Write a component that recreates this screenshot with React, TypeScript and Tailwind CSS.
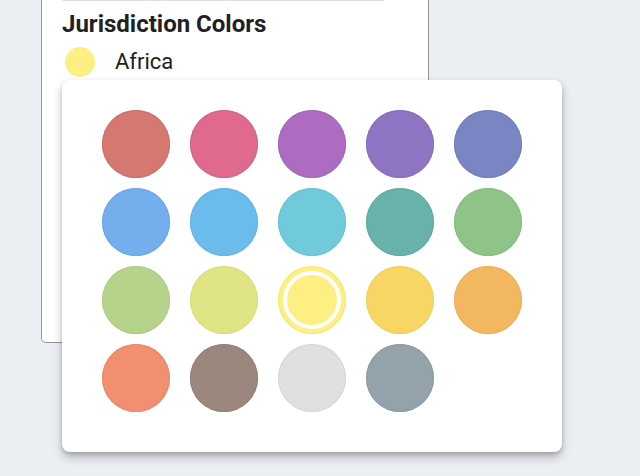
import React from "react";

const colors: { c: string; b: string }[] = [
  { c: "#d57872", b: "#cd6f69" },
  { c: "#df6a8e", b: "#d76286" },
  { c: "#ad6cc1", b: "#a564b9" },
  { c: "#8f74c4", b: "#876cbc" },
  { c: "#7986c3", b: "#717ebb" },
  { c: "#74aeed", b: "#6ca6e5" },
  { c: "#6bbcec", b: "#63b4e4" },
  { c: "#70cadb", b: "#68c2d3" },
  { c: "#68b2aa", b: "#60aaa2" },
  { c: "#8fc489", b: "#87bc81" },
  { c: "#b6d38c", b: "#aecb84" },
  { c: "#dfe584", b: "#d7dd7c" },
  { c: "#fdef82", b: "#f5e77a" },
  { c: "#f7d666", b: "#efce5e" },
  { c: "#f2b760", b: "#eaaf58" },
  { c: "#f09070", b: "#e88868" },
  { c: "#9b877d", b: "#937f75" },
  { c: "#e0e0e0", b: "#d6d6d6" },
  { c: "#94a2ab", b: "#8c9aa3" },
];

export default function App() {
  return (
    <div
      className="relative w-[640px] h-[476px] overflow-hidden bg-[#ebeef3]"
      style={{ fontFamily: "Roboto, 'Liberation Sans', sans-serif" }}
    >
      {/* Background card */}
      <div className="absolute left-[41px] top-[-40px] w-[388px] h-[383px] bg-white border border-[#959595] rounded-[5px]">
        <div className="ml-[20px] mt-[38px] w-[322px] h-[2px] bg-[#e0e0e0]" />
        <div className="ml-[20px] mt-[9px] text-[24px] leading-[28px] font-bold text-[#212121]">
          Jurisdiction Colors
        </div>
        <div className="ml-[23px] mt-[9px] flex items-center">
          <div className="w-[30px] h-[30px] rounded-full bg-[#fdef82]" />
          <div className="ml-[20px] text-[22px] leading-[26px] text-[#212121]">Africa</div>
        </div>
      </div>

      {/* Popup */}
      <div className="absolute left-[62px] top-[80px] w-[500px] h-[372px] bg-white rounded-[8px] shadow-[0_5px_10px_rgba(0,0,0,0.25),0_2px_4px_rgba(0,0,0,0.12)] pl-[40px] pt-[30px]">
        <div className="grid grid-cols-[repeat(5,68px)] gap-x-[20px] gap-y-[10px]">
          {colors.map((col, i) =>
            i === 12 ? (
              <div
                key={i}
                className="w-[68px] h-[68px] rounded-full flex items-center justify-center"
                style={{ backgroundColor: col.c, boxShadow: `inset 0 0 0 1px ${col.b}` }}
              >
                <div
                  className="w-[58px] h-[58px] rounded-full border-[4px] border-white"
                  style={{ backgroundColor: col.c }}
                />
              </div>
            ) : (
              <div
                key={i}
                className="w-[68px] h-[68px] rounded-full"
                style={{ backgroundColor: col.c, boxShadow: `inset 0 0 0 1px ${col.b}` }}
              />
            )
          )}
        </div>
      </div>
    </div>
  );
}
